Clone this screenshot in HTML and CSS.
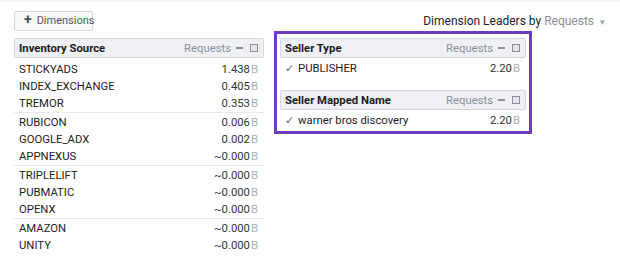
FILE: index.html
```html
<!DOCTYPE html>
<html lang="en">
<head>
    <meta charset="UTF-8">
    <meta name="viewport" content="width=device-width, initial-scale=1.0">
    <title>Dimension Leaders</title>
    <link rel="stylesheet" href="styles.css">
</head>
<body>
    <div class="page">
        <div class="toolbar">
            <button class="add-btn"><span class="plus">+</span>Dimensions</button>
            <div class="leaders">Dimension Leaders by <span class="metric">Requests <span class="caret">&#9662;</span></span></div>
        </div>
        <div class="content">
            <div class="panel left-panel">
                <div class="panel-head">
                    <span class="title">Inventory Source</span>
                    <span class="metric-name">Requests</span>
                    <span class="minus"></span>
                    <span class="box"></span>
                </div>
                <div class="group">
                    <div class="row"><span>STICKYADS</span><span class="val">1.438<span class="unit">B</span></span></div>
                    <div class="row"><span>INDEX_EXCHANGE</span><span class="val">0.405<span class="unit">B</span></span></div>
                    <div class="row"><span>TREMOR</span><span class="val">0.353<span class="unit">B</span></span></div>
                </div>
                <div class="group">
                    <div class="row"><span>RUBICON</span><span class="val">0.006<span class="unit">B</span></span></div>
                    <div class="row"><span>GOOGLE_ADX</span><span class="val">0.002<span class="unit">B</span></span></div>
                    <div class="row"><span>APPNEXUS</span><span class="val">~0.000<span class="unit">B</span></span></div>
                </div>
                <div class="group">
                    <div class="row"><span>TRIPLELIFT</span><span class="val">~0.000<span class="unit">B</span></span></div>
                    <div class="row"><span>PUBMATIC</span><span class="val">~0.000<span class="unit">B</span></span></div>
                    <div class="row"><span>OPENX</span><span class="val">~0.000<span class="unit">B</span></span></div>
                </div>
                <div class="group last">
                    <div class="row"><span>AMAZON</span><span class="val">~0.000<span class="unit">B</span></span></div>
                    <div class="row"><span>UNITY</span><span class="val">~0.000<span class="unit">B</span></span></div>
                </div>
            </div>

            <div class="highlight">
                <div class="panel">
                    <div class="panel-head">
                        <span class="title">Seller Type</span>
                        <span class="metric-name">Requests</span>
                        <span class="minus"></span>
                        <span class="box"></span>
                    </div>
                    <div class="row"><span><span class="check">&#10003;</span>PUBLISHER</span><span class="val">2.20<span class="unit">B</span></span></div>
                </div>
                <div class="panel">
                    <div class="panel-head">
                        <span class="title">Seller Mapped Name</span>
                        <span class="metric-name">Requests</span>
                        <span class="minus"></span>
                        <span class="box"></span>
                    </div>
                    <div class="row"><span><span class="check">&#10003;</span>warner bros discovery</span><span class="val">2.20<span class="unit">B</span></span></div>
                </div>
            </div>
        </div>
    </div>
</body>
</html>
```

FILE: styles.css
```css
body {
    margin: 0;
    font-family: Roboto, "Liberation Sans", sans-serif;
    font-size: 11.3px;
    color: #1c1c1c;
    background: #fff;
    border-top: 2px solid #f4f5f6;
}
.page {
    padding: 8px 14px 0 14px;
}
.toolbar {
    display: flex;
    justify-content: space-between;
    align-items: center;
    height: 21px;
}
.add-btn {
    font-family: inherit;
    font-size: 11px;
    color: #555b66;
    background: #f7f8f9;
    border: 1px solid #d6d9dd;
    border-radius: 2px;
    height: 20px;
    width: 79px;
    padding: 0 0 0 9px;
    text-align: left;
    white-space: nowrap;
}
.plus {
    font-weight: bold;
    font-size: 14px;
    line-height: 10px;
    color: #4a505a;
    margin-right: 5px;
}
.leaders {
    font-size: 12px;
    color: #222;
    padding-right: 1px;
}
.leaders .metric {
    color: #8a9099;
}
.caret {
    font-size: 9px;
    color: #9aa0a8;
    margin-left: 3px;
}
.content {
    display: flex;
    align-items: flex-start;
    gap: 10px;
}
.left-panel {
    width: 250px;
    margin-top: 7px;
}
.panel-head {
    display: flex;
    align-items: center;
    height: 18px;
    background: #eef0f3;
    border: 1px solid #d4d8dd;
    border-radius: 2px;
    padding: 0 5px 0 4px;
}
.panel-head .title {
    flex: 1;
    font-weight: bold;
    color: #1c1c1c;
}
.metric-name {
    color: #8a9099;
}
.minus {
    width: 7px;
    height: 2px;
    background: #8a9099;
    margin: 0 7px 0 5px;
}
.box {
    width: 6px;
    height: 6px;
    border: 1.5px solid #8a9099;
    background: #e2e5e9;
}
.group {
    border-bottom: 1px solid #e6e8eb;
}
.group.last {
    border-bottom: none;
}
.row {
    display: flex;
    justify-content: space-between;
    align-items: center;
    height: 17px;
    padding: 0 6px 0 5px;
}
.row:first-child {
    margin-top: 1px;
}
.panel-head + .group .row:first-child {
    margin-top: 3px;
}
.val {
    color: #333;
}
.unit {
    color: #a9b0ba;
    margin-left: 1px;
}
.check {
    color: #666;
    margin-right: 4px;
}
.highlight {
    width: 246px;
    border: 3px solid #6e3cc2;
    padding: 4px 3px 2px 3px;
}
.highlight .panel + .panel {
    margin-top: 13px;
}
.highlight .row {
    margin-top: 2px;
}
```
